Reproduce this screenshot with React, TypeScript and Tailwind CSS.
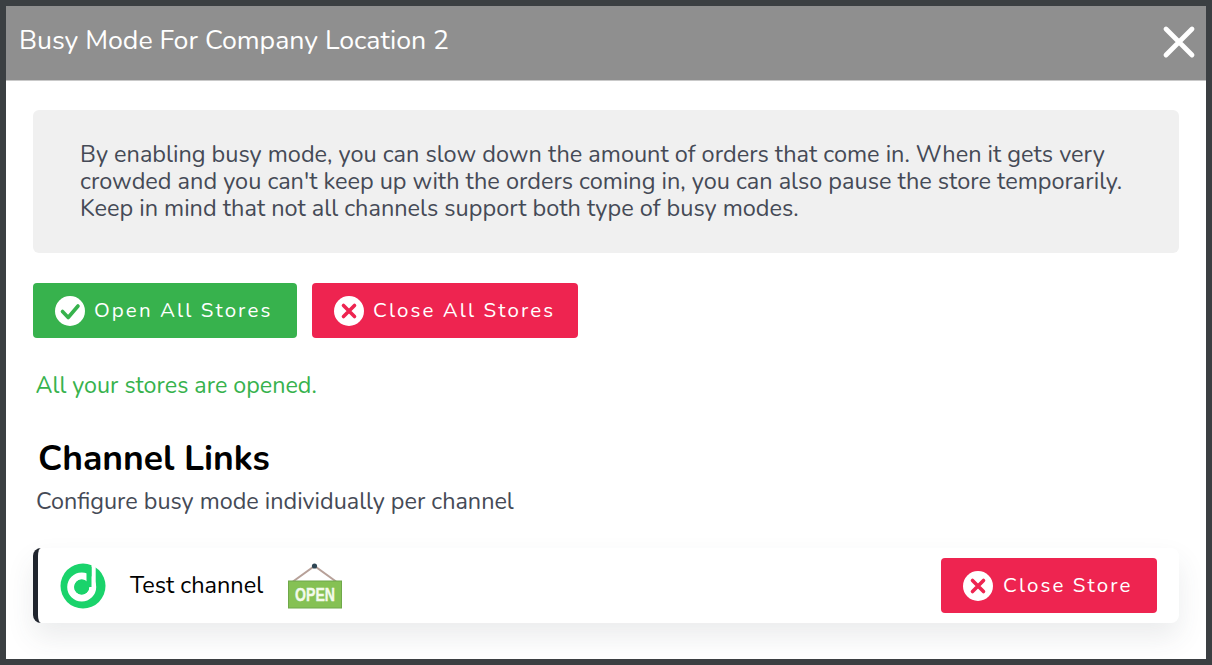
import React from "react";

const CheckIcon = () => (
  <svg width="30" height="30" viewBox="0 0 30 30" className="shrink-0">
    <circle cx="15" cy="15" r="15" fill="#fff" />
    <path d="M7.5 15.5 L13.2 21.5 L23 10" fill="none" stroke="#37b24d" strokeWidth="3.6" strokeLinecap="round" strokeLinejoin="round" />
  </svg>
);

const CrossIcon = () => (
  <svg width="30" height="30" viewBox="0 0 30 30" className="shrink-0">
    <circle cx="15" cy="15" r="15" fill="#fff" />
    <path d="M9.5 9.5 L20.5 20.5 M20.5 9.5 L9.5 20.5" fill="none" stroke="#ee2450" strokeWidth="3.6" strokeLinecap="round" />
  </svg>
);

const Logo = () => (
  <svg width="46" height="46" viewBox="0 0 46 46" className="shrink-0">
    <circle cx="23" cy="23" r="22.5" fill="#1ad36b" />
    <circle cx="21.7" cy="24" r="11" fill="none" stroke="#fff" strokeWidth="7" />
    <rect x="31.5" y="2" width="4.2" height="22" fill="#fff" />
    <rect x="26.5" y="4" width="5" height="20" fill="#1ad36b" />
    <circle cx="21.7" cy="24" r="7.5" fill="#1ad36b" />
  </svg>
);

const OpenSign = () => (
  <svg width="54" height="47" viewBox="0 0 54 47" className="shrink-0 overflow-visible">
    <path d="M5 19.5 L26.5 4 L48 19.5" fill="none" stroke="#b7a199" strokeWidth="2.1" />
    <circle cx="26.5" cy="4" r="2.6" fill="#2f4654" />
    <rect x="0.5" y="19" width="53" height="27" fill="#85c154" stroke="#6fa84a" />
    <text x="27" y="39" textAnchor="middle" fill="#f3faec" stroke="#f3faec" strokeWidth="0.4" fontFamily="'Liberation Sans', sans-serif" fontSize="19" fontWeight="700" textLength="40" lengthAdjust="spacingAndGlyphs">OPEN</text>
  </svg>
);

const btn = "flex items-center h-[55px] rounded-[4px] text-white text-[20.5px] tracking-[2.1px]";

export default function App() {
  return (
    <div className="w-[1212px] h-[665px] overflow-hidden bg-[#3b3f42] p-[6px] font-['Nunito','Lato','Noto_Sans',sans-serif]">
      <div className="w-[1200px] h-[653px] bg-white overflow-hidden flex flex-col">
        <div className="h-[75px] shrink-0 bg-[#8f8f8f] border-b border-[#c9c9c9] flex items-center justify-between pl-[13px] pr-[10px]">
          <h1 className="text-[26.7px] font-normal text-white leading-none -mt-[5px]">Busy Mode For Company Location 2</h1>
          <svg width="34" height="34" viewBox="0 0 34 34" className="-mt-[3px]">
            <path d="M4 4 L30 30 M30 4 L4 30" stroke="#fff" strokeWidth="4.8" strokeLinecap="round" />
          </svg>
        </div>
        <div className="flex-1 px-[27px] pt-[29px] flex flex-col">
          <div className="h-[143px] rounded-[6px] bg-[#f0f0f0] pl-[47px] pr-[30px] pt-[31px] text-[23.5px] leading-[27px] text-[#454a56]">
            By enabling busy mode, you can slow down the amount of orders that come in. When it gets very<br />
            crowded and you can't keep up with the orders coming in, you can also pause the store temporarily.<br />
            Keep in mind that not all channels support both type of busy modes.
          </div>
          <div className="flex gap-[15px] mt-[30px]">
            <button className={`${btn} gap-[9px] w-[264px] bg-[#37b24d] pl-[22px]`}><CheckIcon />Open All Stores</button>
            <button className={`${btn} gap-[9px] w-[266px] bg-[#ee2450] pl-[22px]`}><CrossIcon />Close All Stores</button>
          </div>
          <p className="mt-[33px] ml-[2.5px] text-[23.3px] leading-[28px] text-[#37b24d]">All your stores are opened.</p>
          <h2 className="mt-[38px] ml-[5px] text-[35.5px] leading-[44px] font-bold text-black">Channel Links</h2>
          <p className="mt-[6px] ml-[3px] text-[23.4px] leading-[28px] text-[#454a56]">Configure busy mode individually per channel</p>
          <div className="mt-[33px] h-[75px] rounded-[8px] border-l-[5px] border-[#20252e] bg-white flex items-center pl-[22px] pr-[22px] shadow-[0_14px_28px_rgba(60,64,80,0.1)]">
            <Logo />
            <span className="ml-[24px] text-[23.5px] text-black">Test channel</span>
            <span className="ml-[25px]"><OpenSign /></span>
            <button className={`${btn} gap-[10px] ml-auto w-[216px] bg-[#ee2450] pl-[22px]`}><CrossIcon />Close Store</button>
          </div>
        </div>
      </div>
    </div>
  );
}
